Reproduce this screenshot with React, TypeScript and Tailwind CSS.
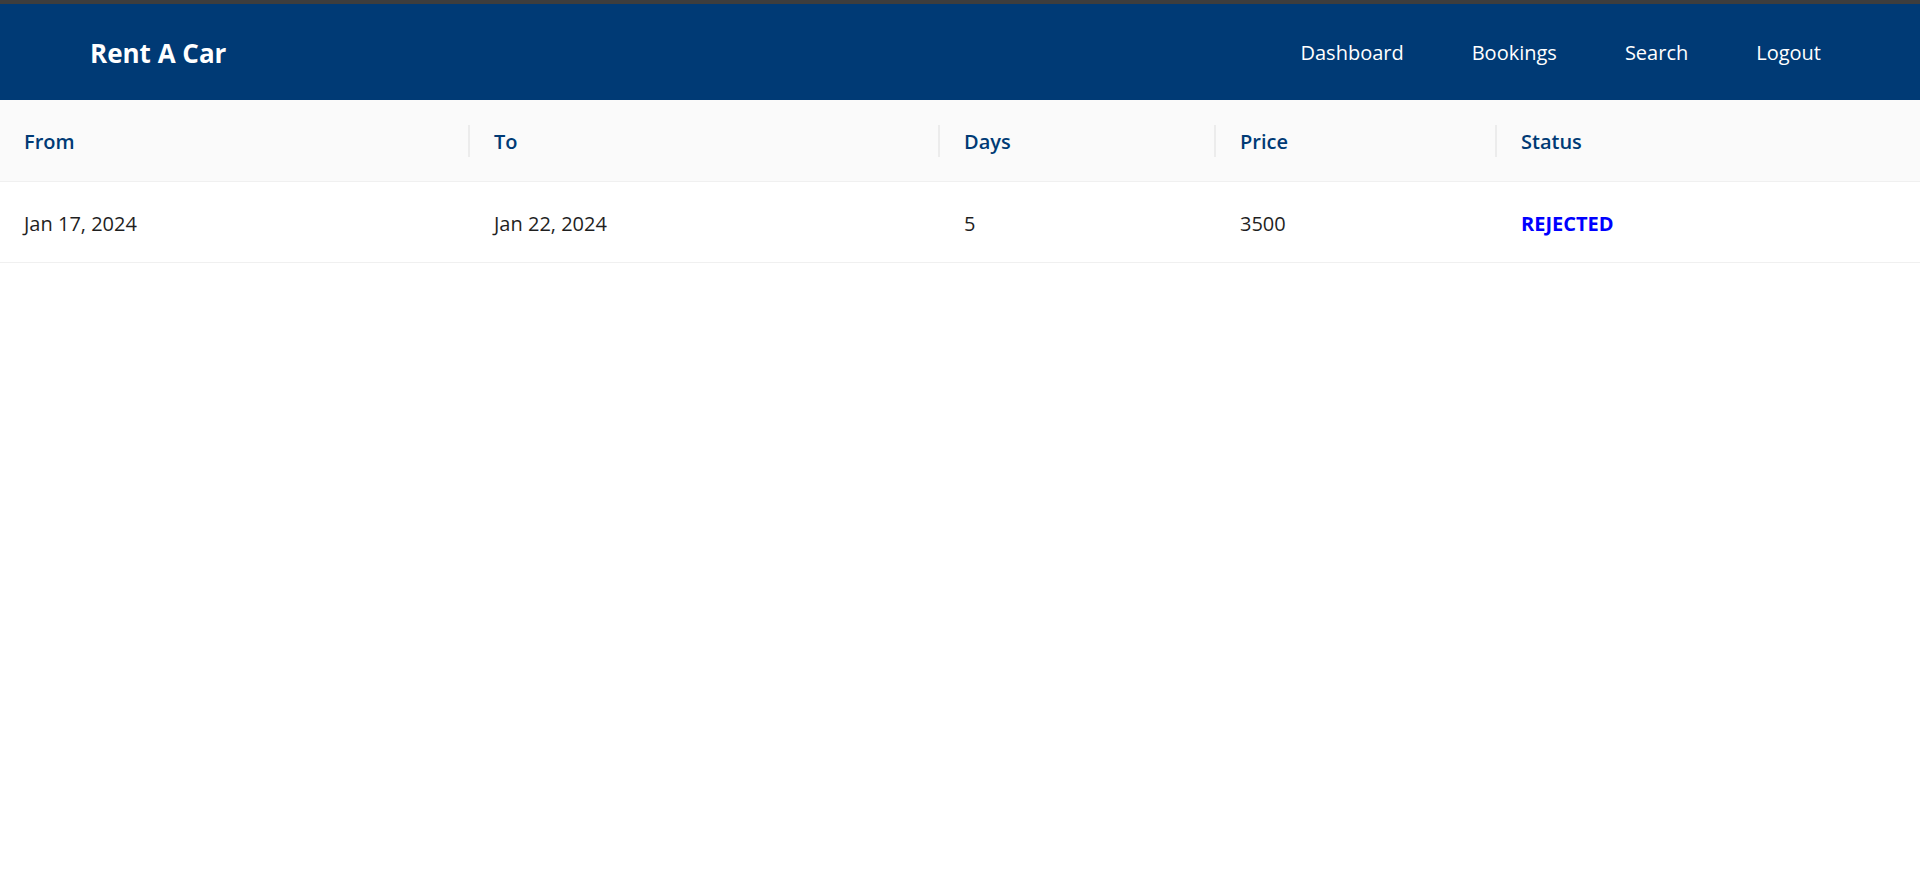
import React from 'react';

interface Booking {
    from: string;
    to: string;
    days: number;
    price: number;
    status: string;
}

const bookings: Booking[] = [
    { from: 'Jan 17, 2024', to: 'Jan 22, 2024', days: 5, price: 3500, status: 'REJECTED' },
];

const columns = [
    { title: 'From', width: 'w-[470px]' },
    { title: 'To', width: 'w-[470px]' },
    { title: 'Days', width: 'w-[276px]' },
    { title: 'Price', width: 'w-[281px]' },
    { title: 'Status', width: '' },
];

const navLinks = ['Dashboard', 'Bookings', 'Search', 'Logout'];

export default function App() {
    return (
        <div className="min-h-screen bg-white font-['Open_Sans',_'Noto_Sans',_sans-serif]">
            <div className="h-[4px] bg-[#3d3d3d]" />
            <header className="h-[96px] bg-[#003a75] flex items-center justify-between pl-[90px] pr-[99px] pt-[2px]">
                <h1 className="text-[26px] font-bold text-white leading-none">Rent A Car</h1>
                <nav className="flex items-center gap-[68px]">
                    {navLinks.map((link) => (
                        <a key={link} href="#" className="text-[20px] text-white leading-none">
                            {link}
                        </a>
                    ))}
                </nav>
            </header>

            <table className="w-full table-fixed border-separate border-spacing-0">
                <colgroup>
                    {columns.map((col) => (
                        <col key={col.title} className={col.width} />
                    ))}
                </colgroup>
                <thead>
                    <tr>
                        {columns.map((col, i) => (
                            <th
                                key={col.title}
                                className="relative h-[82px] px-6 pt-[2px] text-left align-middle bg-[#fafafa] border-b border-[#f0f0f0] text-[20px] font-semibold text-[#003a75]"
                            >
                                {col.title}
                                {i < columns.length - 1 && (
                                    <span className="absolute right-0 top-1/2 -translate-y-1/2 h-8 w-[2px] bg-[#ececec]" />
                                )}
                            </th>
                        ))}
                    </tr>
                </thead>
                <tbody>
                    {bookings.map((b, idx) => (
                        <tr key={idx}>
                            <td className="h-[81px] px-6 pt-[3px] align-middle border-b border-[#f0f0f0] text-[20px] text-[#1f1f1f]">{b.from}</td>
                            <td className="h-[81px] px-6 pt-[3px] align-middle border-b border-[#f0f0f0] text-[20px] text-[#1f1f1f]">{b.to}</td>
                            <td className="h-[81px] px-6 pt-[3px] align-middle border-b border-[#f0f0f0] text-[20px] text-[#1f1f1f]">{b.days}</td>
                            <td className="h-[81px] px-6 pt-[3px] align-middle border-b border-[#f0f0f0] text-[20px] text-[#1f1f1f]">{b.price}</td>
                            <td className="h-[81px] px-6 pt-[3px] align-middle border-b border-[#f0f0f0] text-[20px] font-bold text-[#0000ff]">{b.status}</td>
                        </tr>
                    ))}
                </tbody>
            </table>
        </div>
    );
}
